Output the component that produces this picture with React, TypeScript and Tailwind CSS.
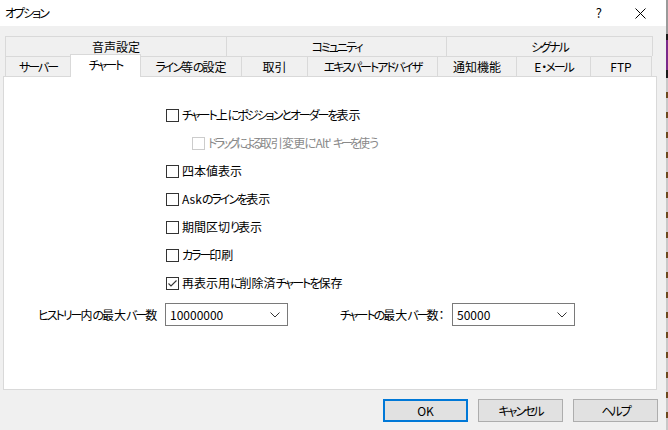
const topTabs = [
  { label: '音声設定', w: 'w-[221px]' },
  { label: 'コミュニティ', w: 'w-[220px]' },
  { label: 'シグナル', w: 'w-[207px] border-r' },
]

const bottomTabs = [
  { label: 'サーバー', w: 'w-[65px]' },
  { label: 'チャート', w: 'w-[71px]', active: true },
  { label: 'ライン等の設定', w: 'w-[101px]' },
  { label: '取引', w: 'w-[66px]' },
  { label: 'エキスパートアドバイザ', w: 'w-[130px]' },
  { label: '通知機能', w: 'w-[79px]' },
  { label: 'E・メール', w: 'w-[74px]' },
  { label: 'FTP', w: 'w-[62px] border-r' },
]

const options = [
  { label: 'チャート上にポジションとオーダーを表示' },
  { label: "ドラッグによる取引変更に'Alt' キーを使う", disabled: true, indent: true },
  { label: '四本値表示' },
  { label: 'Askのラインを表示' },
  { label: '期間区切り表示' },
  { label: 'カラー印刷' },
  { label: '再表示用に削除済チャートを保存', checked: true },
]

// Meiryo UI has narrow kana; tighten kana runs so line lengths match
function Jp({ text, tight }: { text: string; tight?: boolean }) {
  const parts = text.split(/([\u3040-\u30ff]+)/)
  return (
    <span className={`whitespace-nowrap ${tight ? 'tracking-[-0.8px]' : ''}`}>
      {parts.map((p, i) =>
        /^[\u3040-\u30ff]+$/.test(p)
          ? <span key={i} className={tight ? 'tracking-[-3px]' : 'tracking-[-2px]'}>{p}</span>
          : <span key={i}>{p}</span>
      )}
    </span>
  )
}

function Checkbox({ checked, disabled }: { checked?: boolean; disabled?: boolean }) {
  return (
    <span className={`w-[13px] h-[13px] border bg-white flex items-center justify-center flex-shrink-0 ${disabled ? 'border-[#cccccc]' : 'border-[#333333]'}`}>
      {checked && (
        <svg width="11" height="11" viewBox="0 0 11 11">
          <path d="M1.5 5.5 L4 8 L9.5 2.5" fill="none" stroke="#333" strokeWidth="1.1" />
        </svg>
      )}
    </span>
  )
}

function Select({ value }: { value: string }) {
  return (
    <div className="w-[123px] h-[23px] border border-[#7a7a7a] bg-white flex items-center pl-[4px] pr-[7px]">
      <span className="flex-1">{value}</span>
      <svg width="10" height="6" viewBox="0 0 10 6">
        <path d="M0.5 0.5 L5 5 L9.5 0.5" fill="none" stroke="#333" strokeWidth="1" />
      </svg>
    </div>
  )
}

export default function App() {
  return (
    <div className="w-[668px] h-[430px] flex text-[12px] text-black [font-feature-settings:'palt'] font-['Noto_Sans_CJK_JP',sans-serif] overflow-hidden">
      <div className="w-[666px] flex flex-col bg-[#f0f0f0]">
        {/* title bar */}
        <div className="h-[26px] bg-white flex items-center pl-[5px]">
          <span className="flex-1"><Jp text="オプション" /></span>
          <span className="text-[13px] mr-[33px]">?</span>
          <svg width="11" height="11" viewBox="0 0 11 11" className="mr-[20px]">
            <path d="M0.5 0.5 L10.5 10.5 M10.5 0.5 L0.5 10.5" stroke="#000" strokeWidth="1" />
          </svg>
        </div>

        <div className="pt-[10px] flex flex-col">
          <div className="flex ml-[5px]">
            {topTabs.map(t => (
              <div key={t.label} className={`${t.w} h-[20px] border-t border-l border-[#d9d9d9] flex items-center justify-center`}>
                <Jp text={t.label} />
              </div>
            ))}
          </div>
          <div className="flex ml-[5px]">
            {bottomTabs.map(t => (
              <div
                key={t.label}
                className={
                  t.active
                    ? `${t.w} -mr-px h-[23px] -mt-[2px] -mb-px relative z-10 bg-white border-t border-x border-[#d9d9d9] flex items-center justify-center pb-[2px]`
                    : `${t.w} h-[20px] border-t border-l border-[#d9d9d9] flex items-center justify-center`
                }
              >
                <Jp text={t.label} />
              </div>
            ))}
          </div>

          <div className="ml-[3px] w-[654px] h-[314px] border border-[#d9d9d9] bg-white pt-[24px]">
            {options.map(o => (
              <div
                key={o.label}
                className={`h-[28px] flex items-center gap-[3px] ${o.indent ? 'pl-[188px]' : 'pl-[162px]'} ${o.disabled ? 'text-[#8a8a8a]' : ''}`}
              >
                <Checkbox checked={o.checked} disabled={o.disabled} />
                <Jp text={o.label} tight={o.disabled} />
              </div>
            ))}
            <div className="flex items-center mt-[6px] pl-[34px]">
              <span className="w-[127px]"><Jp text="ヒストリー内の最大バー数" /></span>
              <Select value="10000000" />
              <span className="w-[112px] ml-[52px]"><Jp text="チャートの最大バー数：" /></span>
              <Select value="50000" />
            </div>
          </div>
        </div>

        <div className="flex justify-end gap-[10px] pr-[8px] mt-[9px]">
          <button className="w-[85px] h-[23px] bg-[#e1e1e1] border-2 border-[#0078d7] flex items-center justify-center">OK</button>
          <button className="w-[85px] h-[23px] bg-[#e1e1e1] border border-[#adadad] flex items-center justify-center"><Jp text="キャンセル" /></button>
          <button className="w-[85px] h-[23px] bg-[#e1e1e1] border border-[#adadad] flex items-center justify-center"><Jp text="ヘルプ" /></button>
        </div>
      </div>

      {/* sliver of the window behind */}
      <div className="w-[2px] flex flex-col bg-[#c8c8c8]">
        <div className="h-[34px] bg-[#9a9a9a]" />
        <div className="h-[6px] bg-[#1a1a1a]" />
        <div className="h-[30px] bg-[#7a2a8a]" />
        <div className="h-[8px] bg-[#1a1a1a]" />
        <div className="flex-1 bg-[repeating-linear-gradient(to_bottom,#c8c8c8_0px,#c8c8c8_14px,#6b4a1e_14px,#6b4a1e_20px)]" />
      </div>
    </div>
  )
}
